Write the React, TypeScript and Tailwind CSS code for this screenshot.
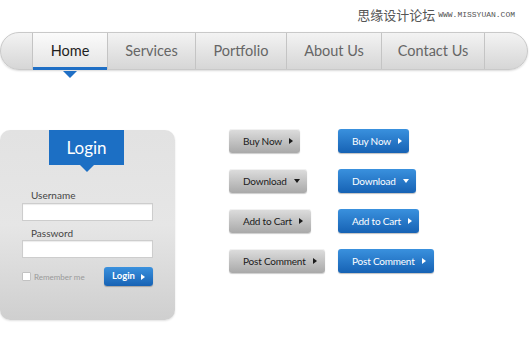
import React from 'react';

const navItems = [
  { label: 'Home', w: 'w-[75px]', active: true },
  { label: 'Services', w: 'w-[88px]' },
  { label: 'Portfolio', w: 'w-[91px]' },
  { label: 'About Us', w: 'w-[95px]' },
  { label: 'Contact Us', w: 'w-[103px]' },
];

const buttons = [
  { label: 'Buy Now', gray: 'w-[71px]', blue: 'w-[71px]' },
  { label: 'Download', gray: 'w-[78px]', blue: 'w-[78px]', down: true },
  { label: 'Add to Cart', gray: 'w-[82px]', blue: 'w-[81px]' },
  { label: 'Post Comment', gray: 'w-[96px]', blue: 'w-[96px]' },
];

function Arrow({ down }: { down?: boolean }) {
  if (down) {
    return <span className="inline-block w-0 h-0 border-x-[3.5px] border-x-transparent border-t-[4px] border-t-current" />;
  }
  return <span className="inline-block w-0 h-0 border-y-[3px] border-y-transparent border-l-[4px] border-l-current" />;
}

function NavBar() {
  return (
    <div className="w-[528px] h-[38px] rounded-[19px] border border-[#c9c9c9] bg-linear-to-b from-[#f3f3f3] to-[#d6d6d6] shadow-[0_1px_2px_rgba(0,0,0,0.15)] flex">
      <div className="w-[31px]" />
      {navItems.map((item) => (
        <div
          key={item.label}
          className={`${item.w} relative flex items-center justify-center border-l border-[#c4c4c4] text-[14.5px] ${
            item.active
              ? 'bg-linear-to-b from-[#fbfbfb] to-[#e4e4e4] text-[#1e1e1e]'
              : 'text-[#666]'
          }`}
        >
          {item.label}
          {item.active && (
            <>
              <span className="absolute left-0 right-0 -bottom-px h-[3px] bg-[#1f6fc5]" />
              <span className="absolute left-1/2 -translate-x-1/2 top-[calc(100%+2px)] w-0 h-0 border-x-[7px] border-x-transparent border-t-[7px] border-t-[#1f6fc5]" />
            </>
          )}
        </div>
      ))}
      <div className="flex-1 border-l border-[#c4c4c4]" />
    </div>
  );
}

function LoginPanel() {
  return (
    <div className="w-[175px] h-[190px] rounded-[10px] bg-linear-to-b from-[#e2e2e2] via-[#e6e6e6] to-[#cfcfcf] shadow-[0_1px_2px_rgba(0,0,0,0.12)] flex flex-col">
      <div className="relative ml-[49px] w-[75px] h-[35px] bg-[#1c6fc4] flex items-center justify-center text-white text-[17px]">
        Login
        <span className="absolute left-1/2 -translate-x-1/2 top-full w-0 h-0 border-x-[7px] border-x-transparent border-t-[7px] border-t-[#1c6fc4]" />
      </div>
      <div className="px-[22px] flex flex-col">
        <div className="mt-[24px] pl-[9px] h-[12px] leading-[12px] text-[10px] text-[#444]">Username</div>
        <div className="mt-[2px] h-[18px] bg-white border border-[#cdcdcd] shadow-[inset_0_1px_1px_rgba(0,0,0,0.08)]" />
        <div className="mt-[6px] pl-[9px] h-[12px] leading-[12px] text-[10px] text-[#444]">Password</div>
        <div className="mt-[1px] h-[18px] bg-white border border-[#cdcdcd] shadow-[inset_0_1px_1px_rgba(0,0,0,0.08)]" />
        <div className="mt-[9px] flex items-center">
          <span className="w-[9px] h-[9px] bg-white border border-[#c2c2c2] rounded-[1px]" />
          <span className="ml-[3px] text-[8px] text-[#999]">Remember me</span>
          <div className="ml-auto w-[49px] h-[19px] rounded-[3px] bg-linear-to-b from-[#3a91de] to-[#1662b4] shadow-[0_1px_1px_rgba(0,0,0,0.25)] text-white text-[9.5px] font-bold flex items-center justify-center gap-[6px]">
            Login <Arrow />
          </div>
        </div>
      </div>
    </div>
  );
}

export default function App() {
  return (
    <div className="w-[530px] h-[353px] bg-white overflow-hidden font-['Lato',sans-serif]">
      <div className="h-[32px] flex items-start justify-end pr-[15px] pt-[8px] text-[#555]">
        <span className="text-[13px] leading-[14px] font-['Noto_Sans_CJK_SC',sans-serif]">思缘设计论坛</span>
        <span className="ml-[3px] text-[8px] leading-[14px] font-['Liberation_Mono',monospace]">WWW.MISSYUAN.COM</span>
      </div>
      <NavBar />
      <div className="mt-[60px] flex items-start">
        <LoginPanel />
        <div className="ml-[54px] -mt-px grid grid-cols-[109px_auto] content-start gap-y-[16px]">
          {buttons.map((b) => (
            <React.Fragment key={b.label}>
              <div className={`${b.gray} h-6 rounded-[3px] bg-linear-to-b from-[#dedede] to-[#a9a9a9] shadow-[inset_0_1px_0_rgba(255,255,255,0.6),0_1px_1px_rgba(0,0,0,0.2)] text-[#1a1a1a] text-[10px] tracking-[-0.2px] flex items-center pl-[14px] gap-[7px]`}>
                {b.label} <Arrow down={b.down} />
              </div>
              <div className={`${b.blue} h-6 rounded-[3px] bg-linear-to-b from-[#3a91de] to-[#1662b4] shadow-[0_1px_1px_rgba(0,0,0,0.25)] text-white text-[10px] tracking-[-0.2px] flex items-center pl-[14px] gap-[7px]`}>
                {b.label} <Arrow down={b.down} />
              </div>
            </React.Fragment>
          ))}
        </div>
      </div>
    </div>
  );
}
